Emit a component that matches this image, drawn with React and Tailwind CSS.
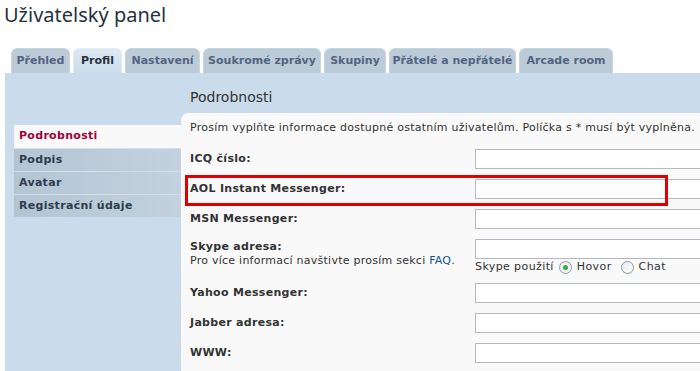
import React from 'react';

const TABS = [
  { label: 'Přehled', w: 'w-[59px]' },
  { label: 'Profil', w: 'w-[49px]', active: true },
  { label: 'Nastavení', w: 'w-[75px]' },
  { label: 'Soukromé zprávy', w: 'w-[118px]' },
  { label: 'Skupiny', w: 'w-[62px]' },
  { label: 'Přátelé a nepřátelé', w: 'w-[127px]' },
  { label: 'Arcade room', w: 'w-[94px]' },
];

const MENU = ['Podrobnosti', 'Podpis', 'Avatar', 'Registrační údaje'];

const FIELDS = ['ICQ číslo:', 'AOL Instant Messenger:', 'MSN Messenger:'];
const FIELDS2 = ['Yahoo Messenger:', 'Jabber adresa:', 'WWW:'];

function Input() {
  return <div className="h-[20px] w-[260px] shrink-0 border border-[#b4bac0] bg-white" />;
}

function Row({ label }) {
  return (
    <div className="flex h-[30px] items-start">
      <div className="w-[285px] shrink-0 pt-[2px] font-bold tracking-[0.3px] text-[#333]">{label}</div>
      <Input />
    </div>
  );
}

function Radio({ checked }) {
  return (
    <span className="mx-[5px] inline-flex h-[13px] w-[13px] items-center justify-center rounded-full border border-[#8a9aa8] bg-gradient-to-br from-[#e6e8ea] to-white align-middle">
      {checked && <span className="h-[5px] w-[5px] rounded-full bg-[#3aa845]" />}
    </span>
  );
}

export default function App() {
  return (
    <div className="h-[371px] w-[700px] overflow-hidden bg-white text-[11px] text-[#333]" style={{ fontFamily: '"DejaVu Sans", Verdana, sans-serif' }}>
      <h2 className="pl-[4px] pt-[2px] text-[20px] leading-[26px] text-[#28313f]" style={{ fontFamily: '"Noto Sans", "DejaVu Sans", sans-serif' }}>
        Uživatelský panel
      </h2>

      <div className="mt-[20px] flex gap-[3px] pl-[11px]">
        {TABS.map((t) => (
          <div
            key={t.label}
            className={`flex h-[25px] ${t.w} shrink-0 items-center justify-center whitespace-nowrap rounded-t-[6px] border-x border-t font-bold ${
              t.active
                ? 'border-[#e4edf5] bg-gradient-to-b from-[#dde8f1] to-[#cadceb] text-[#28313f]'
                : 'border-[#c9d6e0] bg-[#bccbd8] text-[#536482]'
            }`}
          >
            {t.label}
          </div>
        ))}
      </div>

      <div className="ml-[5px] flex h-[300px] bg-[#cadceb]">
        <div className="w-[176px] shrink-0 pl-[9px] pt-[52px]">
          {MENU.map((m, i) => (
            <div
              key={m}
              className={`flex h-[23px] items-center pl-[5px] font-bold tracking-[0.3px] ${
                i === 0
                  ? 'bg-[#f9f9f9] text-[#a5003b]'
                  : 'border-t border-[#d4dee7] bg-gradient-to-r from-[#b3c4d3] to-[#c3d2de] text-[#2d3d4e]'
              }`}
            >
              {m}
            </div>
          ))}
        </div>

        <div className="flex min-w-0 flex-1 flex-col tracking-[0.25px]">
          <div className="flex h-[44px] items-center pl-[9px] pt-[8px] text-[14px] tracking-normal text-[#333]">Podrobnosti</div>
          <div className="relative flex-1 rounded-tl-[7px] bg-[#f9f9f9] pl-[9px]">
            <p className="pt-[8px] leading-[14px]">
              Prosím vyplňte informace dostupné ostatním uživatelům. Políčka s * musí být vyplněna.
            </p>
            <div className="mt-[14px]">
              {FIELDS.map((f) => (
                <Row key={f} label={f} />
              ))}
              <div className="flex h-[44px] items-start">
                <div className="w-[285px] shrink-0 pt-[1px] leading-[14px]">
                  <div className="font-bold tracking-[0.3px]">Skype adresa:</div>
                  <div>
                    Pro více informací navštivte prosím sekci <span className="text-[#105289]">FAQ</span>.
                  </div>
                </div>
                <div className="shrink-0">
                  <Input />
                  <div className="mt-[1px] flex items-center leading-[14px] tracking-[0.4px]">
                    Skype použití
                    <Radio checked />
                    Hovor
                    <span className="w-[4px]" />
                    <Radio />
                    Chat
                  </div>
                </div>
              </div>
              {FIELDS2.map((f) => (
                <Row key={f} label={f} />
              ))}
            </div>

            <div className="absolute left-[4px] top-[62px] h-[31px] w-[483px] border-[3px] border-[#e00000]" />
          </div>
        </div>
      </div>
    </div>
  );
}
